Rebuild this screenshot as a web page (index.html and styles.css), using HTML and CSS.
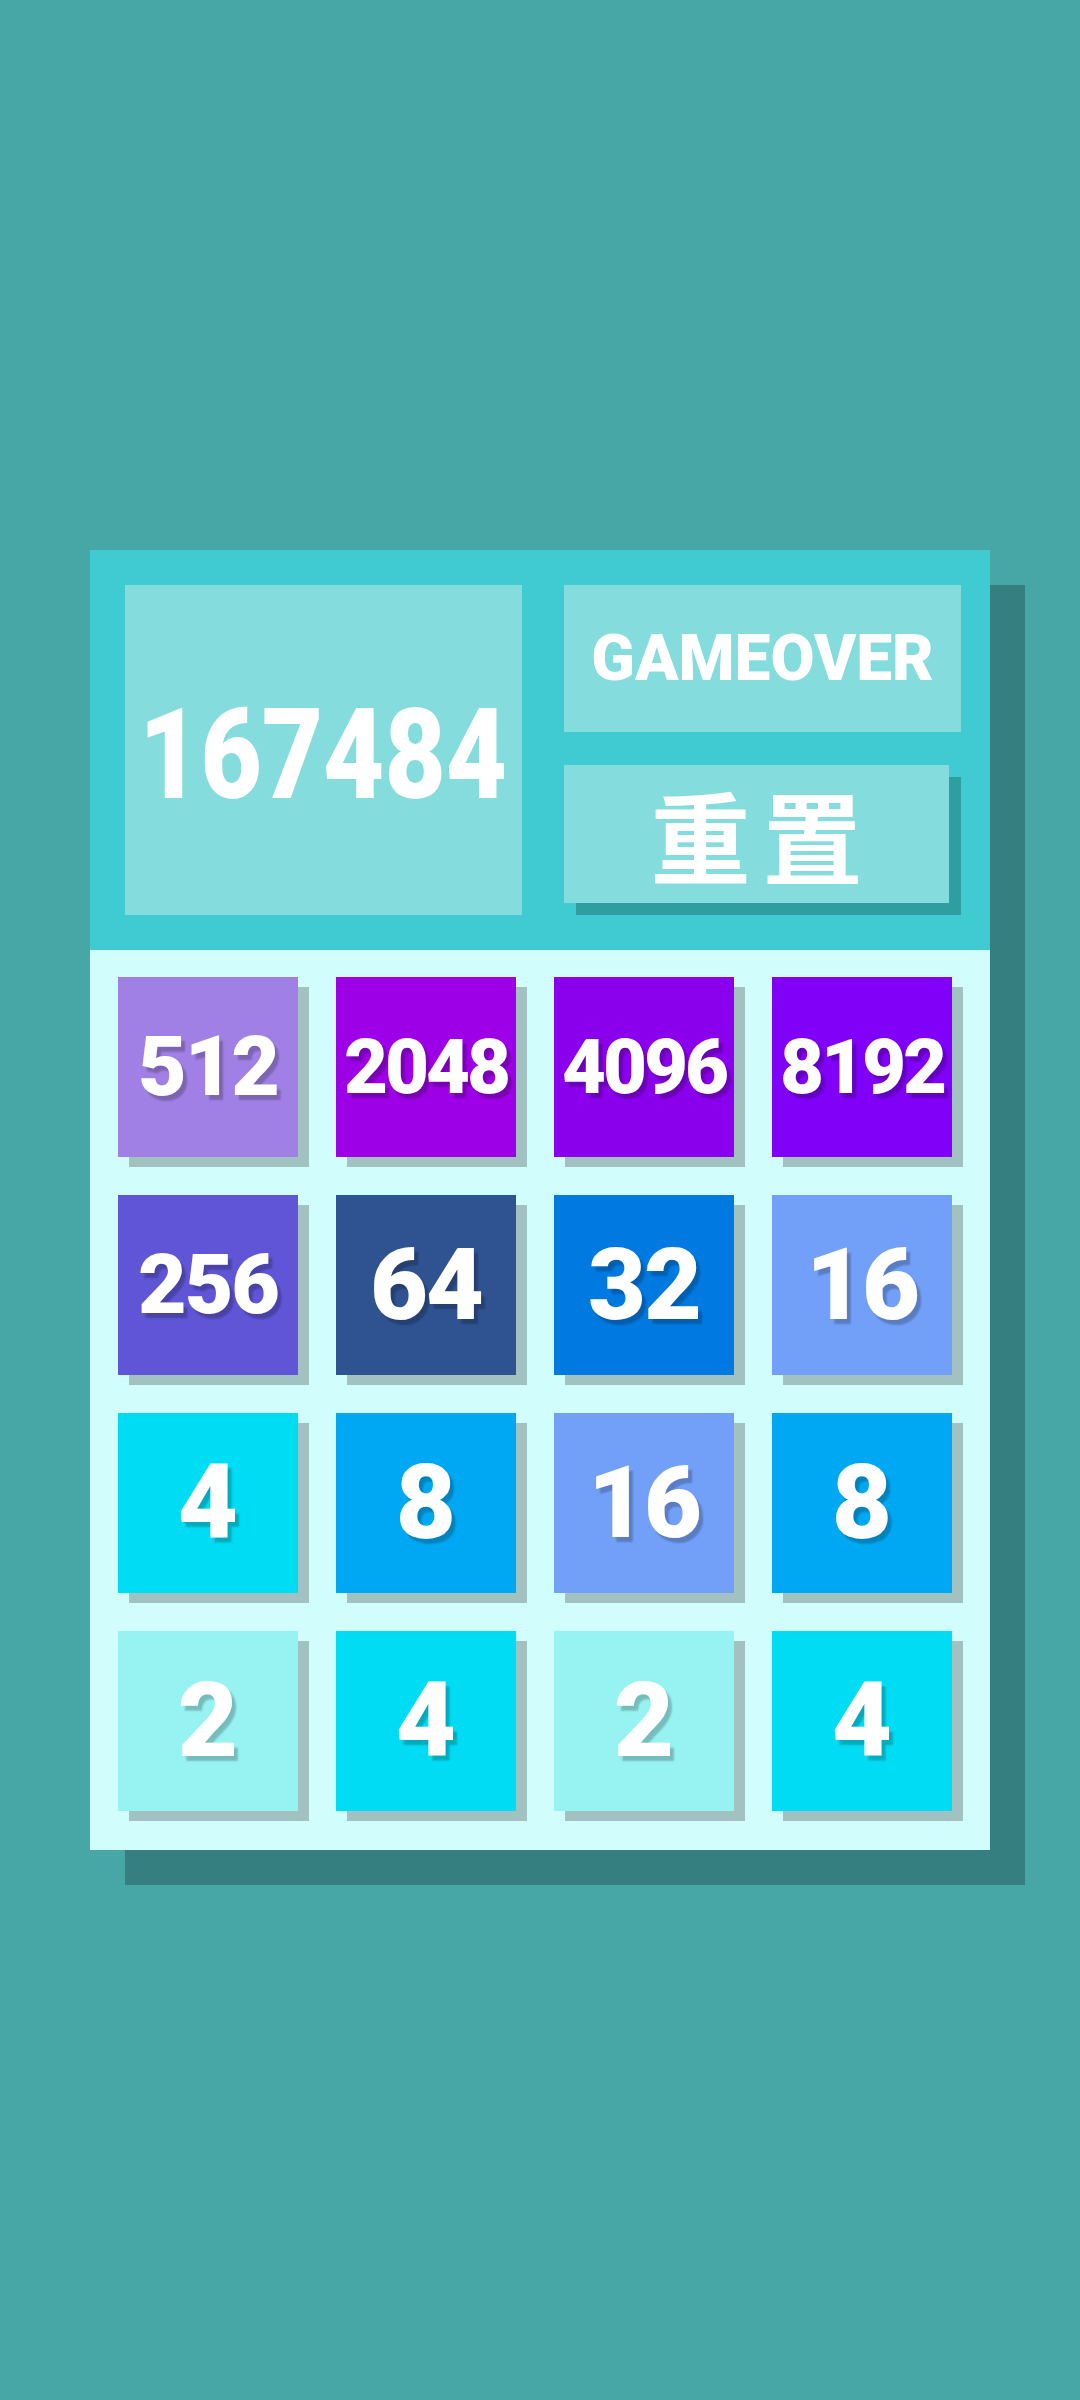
FILE: index.html
```html
<!DOCTYPE html>
<html lang="zh">
<head>
<meta charset="utf-8">
<title>2048</title>
<link rel="stylesheet" href="styles.css">
</head>
<body>
<div class="game">
  <div class="header">
    <div class="score"><span class="score-num">167484</span></div>
    <div class="side">
      <div class="status">GAMEOVER</div>
      <div class="reset">重置</div>
    </div>
  </div>
  <div class="board">
    <div class="tile t512 d3">512</div>
    <div class="tile t2048 d4">2048</div>
    <div class="tile t4096 d4">4096</div>
    <div class="tile t8192 d4">8192</div>
    <div class="tile t256 d3">256</div>
    <div class="tile t64 d2">64</div>
    <div class="tile t32 d2">32</div>
    <div class="tile t16 d2">16</div>
    <div class="tile t4 d1">4</div>
    <div class="tile t8 d1">8</div>
    <div class="tile t16 d2">16</div>
    <div class="tile t8 d1">8</div>
    <div class="tile t2 d1">2</div>
    <div class="tile t4 d1">4</div>
    <div class="tile t2 d1">2</div>
    <div class="tile t4 d1">4</div>
  </div>
</div>
</body>
</html>
```
FILE: styles.css
```css
html, body {
  margin: 0;
  padding: 0;
}
body {
  background: #47a7a7;
  height: 2400px;
  display: flex;
  align-items: center;
  justify-content: center;
  font-family: Roboto, "Noto Sans", sans-serif;
}
.game {
  width: 900px;
  box-shadow: 35px 35px 0 #357f80;
}
.header {
  background: #40cbd3;
  height: 400px;
  box-sizing: border-box;
  padding: 35px 29px 35px 35px;
  display: flex;
  gap: 42px;
}
.score {
  width: 397px;
  height: 330px;
  background: #84dcdd;
  display: flex;
  align-items: center;
  justify-content: center;
}
.score-num {
  color: #fff;
  font-weight: 900;
  font-size: 126px;
  line-height: 1;
  display: inline-block;
  transform: scaleX(0.84);
  padding-top: 10px;
}
.side {
  width: 397px;
  display: flex;
  flex-direction: column;
  gap: 33px;
}
.status {
  height: 147px;
  background: #84dcdd;
  display: flex;
  align-items: center;
  justify-content: center;
  color: #fff;
  font-weight: 900;
  font-size: 64px;
  line-height: 1;
}
.reset {
  width: 385px;
  height: 138px;
  background: #84dcdd;
  box-shadow: 12px 12px 0 #2e9ea1;
  display: flex;
  align-items: center;
  justify-content: center;
  color: #fff;
  font-family: "Noto Sans CJK SC", "Noto Sans", sans-serif;
  font-weight: 700;
  font-size: 100px;
  letter-spacing: 12px;
  text-indent: 12px;
  line-height: 1;
}
.board {
  background: #d2fdfd;
  padding: 27px 38px 39px 28px;
  display: grid;
  grid-template-columns: repeat(4, 180px);
  grid-auto-rows: 180px;
  gap: 38px;
}
.tile {
  box-shadow: 11px 10px 0 #a2c1c1;
  display: flex;
  align-items: center;
  justify-content: center;
  color: #fff;
  font-weight: 900;
  line-height: 1;
  text-shadow: 4px 5px 2px rgba(0, 0, 0, 0.22);
}
.d1 { font-size: 104px; }
.d2 { font-size: 100px; letter-spacing: -2px; }
.d3 { font-size: 84px; letter-spacing: -2px; }
.d4 { font-size: 76px; letter-spacing: -3px; }
.t2 { background: #97f3f2; }
.t4 { background: #00dcf3; }
.t8 { background: #00a8f3; }
.t16 { background: #72a0f9; }
.t32 { background: #0079e1; }
.t64 { background: #2f5291; }
.t256 { background: #6055d6; }
.t512 { background: #a180e6; }
.t2048 { background: #9d00e6; }
.t4096 { background: #8b00ec; }
.t8192 { background: #8000f8; }
```
